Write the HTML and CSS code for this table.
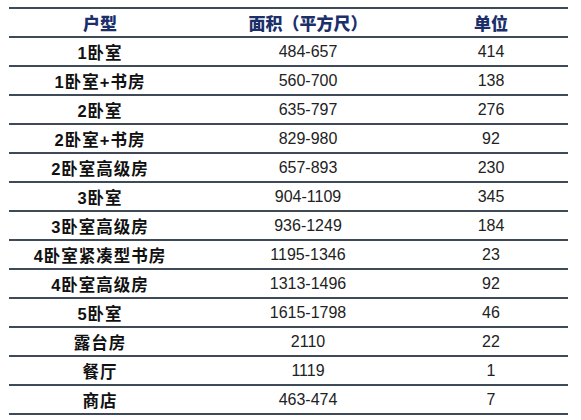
FILE: index.html
```html
<!DOCTYPE html>
<html lang="zh">
<head>
<meta charset="utf-8">
<link rel="stylesheet" href="styles.css">
</head>
<body>
<table class="units">
  <colgroup>
    <col class="c1"><col class="c2"><col class="c3">
  </colgroup>
  <thead>
    <tr><th>户型</th><th>面积（平方尺）</th><th class="last">单位</th></tr>
  </thead>
  <tbody>
    <tr><td class="type">1卧室</td><td>484-657</td><td class="last">414</td></tr>
    <tr><td class="type">1卧室+书房</td><td>560-700</td><td class="last">138</td></tr>
    <tr><td class="type">2卧室</td><td>635-797</td><td class="last">276</td></tr>
    <tr><td class="type">2卧室+书房</td><td>829-980</td><td class="last">92</td></tr>
    <tr><td class="type">2卧室高级房</td><td>657-893</td><td class="last">230</td></tr>
    <tr><td class="type">3卧室</td><td>904-1109</td><td class="last">345</td></tr>
    <tr><td class="type">3卧室高级房</td><td>936-1249</td><td class="last">184</td></tr>
    <tr><td class="type">4卧室紧凑型书房</td><td>1195-1346</td><td class="last">23</td></tr>
    <tr><td class="type">4卧室高级房</td><td>1313-1496</td><td class="last">92</td></tr>
    <tr><td class="type">5卧室</td><td>1615-1798</td><td class="last">46</td></tr>
    <tr><td class="type">露台房</td><td>2110</td><td class="last">22</td></tr>
    <tr><td class="type">餐厅</td><td>1119</td><td class="last">1</td></tr>
    <tr><td class="type">商店</td><td>463-474</td><td class="last">7</td></tr>
  </tbody>
</table>
</body>
</html>
```
FILE: styles.css
```css
html, body {
  margin: 0;
  padding: 0;
  background: #ffffff;
}
body {
  padding: 7px 0 0 9px;
  font-family: "Liberation Sans", "Noto Sans CJK SC", sans-serif;
}
.units {
  border-collapse: collapse;
  width: 559px;
  table-layout: fixed;
}
.c1 { width: 182px; }
.c2 { width: 234px; }
.c3 { width: 143px; }
.units th,
.units td {
  padding: 0;
  text-align: center;
  vertical-align: middle;
  border-bottom: 2px solid #3e4a57;
  white-space: nowrap;
}
.units th {
  height: 27px;
  border-top: 2px solid #3e4a57;
  font-family: "Liberation Sans", "Noto Sans CJK SC", sans-serif;
  font-weight: 900;
  font-size: 17px;
  color: #1b2f6b;
}
.units td {
  height: 27px;
  font-size: 16px;
  color: #222222;
}
.units td.type {
  font-family: "Liberation Sans", "Noto Sans CJK SC", sans-serif;
  font-weight: bold;
  font-size: 16.5px;
  letter-spacing: 1px;
  color: #111111;
}
.units .last {
  padding-right: 11px;
}
```
